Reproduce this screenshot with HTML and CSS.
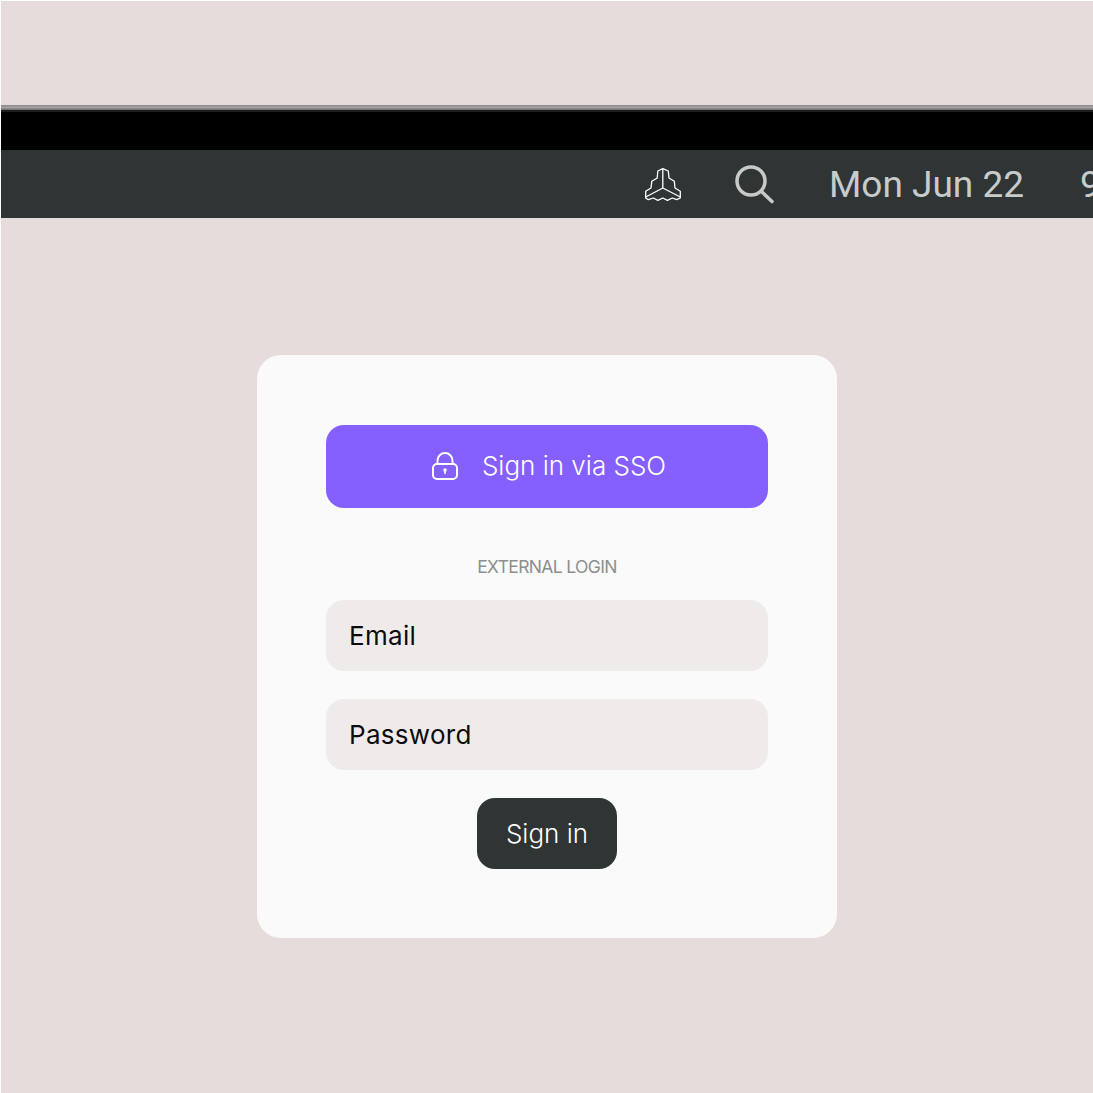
FILE: index.html
```html
<!DOCTYPE html>
<html lang="en">
<head>
    <meta charset="UTF-8">
    <title>Sign in</title>
    <link rel="stylesheet" href="styles.css">
</head>
<body>
    <div class="page">
        <div class="edge"></div>
        <div class="bezel"></div>
        <div class="menubar">
            <svg class="logo" width="36" height="33" viewBox="0 0 36 33" fill="none" stroke="#fff" stroke-width="1.3" stroke-linejoin="round">
                <path d="M17.8 .7 L12.8 3 L12.2 10 L6.8 13.3 L6 20 L.7 23.3 V30 L3.3 31.7 L8.3 30 L12.8 32.3 L17.8 30 L22.4 32.3 L27.3 30 L31.7 31.7 L35.3 30 V23.3 L30 20 L29.3 13.3 L24 10 L23.3 3 Z"/>
                <path d="M17.8 .7 V20 L.7 29 M17.8 20 L35.3 29"/>
            </svg>
            <svg class="search" width="40" height="40" viewBox="0 0 40 40" fill="none" stroke="#c9c9c9" stroke-width="3.5" stroke-linecap="round">
                <circle cx="16" cy="17" r="14"/>
                <path d="M26.5 27.5 L37 37.5"/>
            </svg>
            <span class="date">Mon Jun 22</span>
            <span class="time">9:41</span>
        </div>

        <div class="card">
            <button class="sso">
                <svg width="26" height="28" viewBox="0 0 26 28" fill="none" stroke="#fff" stroke-width="2">
                    <rect x="1" y="12" width="24" height="15" rx="4"/>
                    <path d="M5.5 12 V8.5 a7.5 7.5 0 0 1 15 0 V12"/>
                    <circle cx="13" cy="18" r="1.8" fill="#fff" stroke="none"/>
                    <path d="M13 18 V22" stroke-width="1.6"/>
                </svg>
                Sign in via SSO
            </button>
            <p class="divider">EXTERNAL LOGIN</p>
            <div class="field">Email</div>
            <div class="field">Password</div>
            <button class="signin">Sign in</button>
        </div>
    </div>
</body>
</html>
```

FILE: styles.css
```css
* {
    box-sizing: border-box;
}

html, body {
    margin: 0;
    height: 100%;
}

body {
    background: #fff;
    font-family: Inter, "Liberation Sans", sans-serif;
    overflow: hidden;
}

.page {
    height: 1092px;
    margin: 1px 0 0 1px;
    padding-top: 104px;
    background: #e6dcdb;
    overflow: hidden;
}

.edge {
    height: 5px;
    background: linear-gradient(#8a8889, #a3a1a2 50%, #6a6a6a);
}

.bezel {
    height: 40px;
    background: #000;
    border-top: 2px solid #1d1d1d;
}

.menubar {
    height: 68px;
    display: flex;
    align-items: center;
    padding-left: 644px;
    background: #2f3535;
    white-space: nowrap;
}

.menubar svg {
    flex-shrink: 0;
}

.search {
    margin-left: 54px;
}

.date {
    margin-left: 54px;
    font-family: Roboto, sans-serif;
    font-size: 37px;
    color: #c9cbcb;
}

.time {
    margin-left: 56px;
    font-family: Roboto, sans-serif;
    font-size: 37px;
    color: #c9cbcb;
}

.card {
    width: 580px;
    height: 583px;
    margin: 137px 0 0 256px;
    padding: 70px 69px 0;
    background: #fafafa;
    border-radius: 24px;
    display: flex;
    flex-direction: column;
    align-items: center;
}

button {
    border: none;
    font-family: inherit;
}

.sso {
    width: 442px;
    height: 83px;
    padding: 0 0 2px 4px;
    display: flex;
    align-items: center;
    justify-content: center;
    gap: 24px;
    background: #8660ff;
    color: #fff;
    font-size: 26px;
    font-weight: 300;
    border-radius: 18px;
}

.divider {
    margin: 49px 0 0;
    height: 19px;
    line-height: 19px;
    font-size: 17.5px;
    letter-spacing: -0.65px;
    color: #8d8f8f;
}

.field {
    width: 442px;
    height: 71px;
    margin-top: 24px;
    padding-left: 23px;
    display: flex;
    align-items: center;
    background: #efebeb;
    border-radius: 18px;
    font-size: 26px;
    letter-spacing: 0.3px;
    color: #0c0c0c;
}

.field + .field {
    margin-top: 28px;
}

.signin {
    width: 140px;
    height: 71px;
    margin-top: 28px;
    background: #2f3535;
    color: #fff;
    font-size: 26px;
    font-weight: 300;
    border-radius: 18px;
}
```
